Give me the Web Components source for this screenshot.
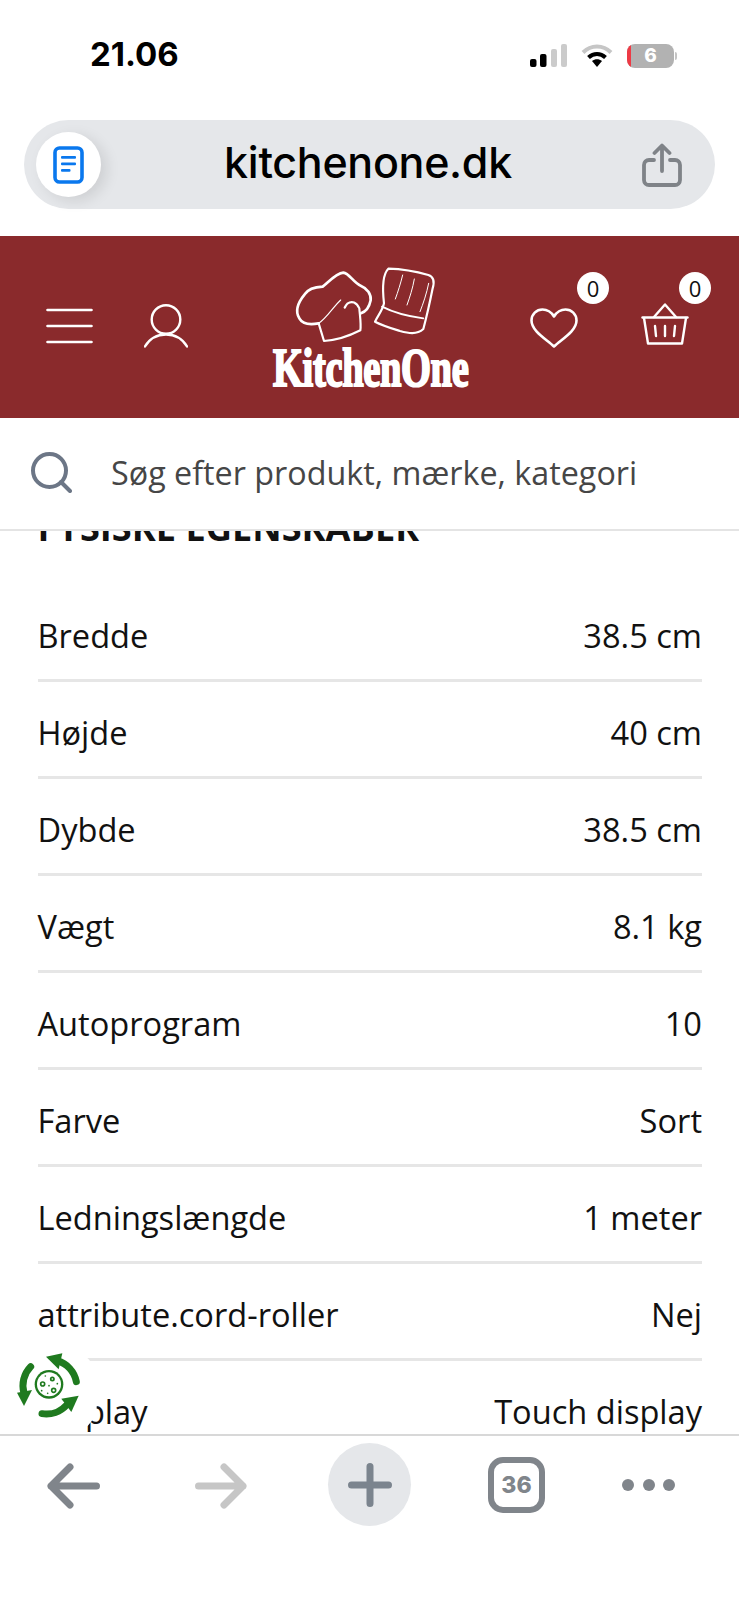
<!DOCTYPE html>
<html lang="da">
<head>
<meta charset="utf-8">
<title>KitchenOne</title>
<style>
    html, body { margin: 0; padding: 0; background: #fff; }
    body { width: 739px; height: 1600px; overflow: hidden; font-family: "Open Sans", sans-serif; }
</style>
</head>
<body>
<phone-page>
    <status-bar slot="top" time="21.06" battery="6"></status-bar>
    <url-bar slot="top" host="kitchenone.dk"></url-bar>
    <site-header slot="top"></site-header>
    <search-bar slot="top" placeholder="Søg efter produkt, mærke, kategori"></search-bar>

    <spec-table title="FYSISKE EGENSKABER">
        <spec-row><span slot="label">Bredde</span>38.5 cm</spec-row>
        <spec-row><span slot="label">Højde</span>40 cm</spec-row>
        <spec-row><span slot="label">Dybde</span>38.5 cm</spec-row>
        <spec-row><span slot="label">Vægt</span>8.1 kg</spec-row>
        <spec-row><span slot="label">Autoprogram</span>10</spec-row>
        <spec-row><span slot="label">Farve</span>Sort</spec-row>
        <spec-row><span slot="label">Ledningslængde</span>1 meter</spec-row>
        <spec-row><span slot="label">attribute.cord-roller</span>Nej</spec-row>
        <spec-row><span slot="label">Display</span>Touch display</spec-row>
    </spec-table>

    <eco-badge slot="overlay"></eco-badge>
    <browser-toolbar slot="bottom" tabs="36"></browser-toolbar>
</phone-page>

<script>
class PhonePage extends HTMLElement {
    constructor() {
        super();
        this.attachShadow({ mode: "open" });
        this.shadowRoot.innerHTML = `
            <style>
                :host { display: flex; flex-direction: column; position: relative; width: 739px; height: 1600px; overflow: hidden; }
                main { flex: 1; min-height: 0; overflow: hidden; }
            </style>
            <slot name="top"></slot>
            <main><slot></slot></main>
            <slot name="overlay"></slot>
            <slot name="bottom"></slot>
        `;
    }
}

class StatusBar extends HTMLElement {
    constructor() {
        super();
        this.attachShadow({ mode: "open" });
        this.shadowRoot.innerHTML = `
            <style>
                :host { display: flex; align-items: center; height: 120px; box-sizing: border-box; padding: 0 62px 12px 90px; justify-content: space-between; font-family: Inter, sans-serif; }
                .time { font-size: 33px; font-weight: 700; color: #000; letter-spacing: 0; }
                .icons { display: flex; align-items: center; gap: 14px; margin-top: 3px; }
                .bat { position: relative; width: 47px; height: 24px; border-radius: 8px; background: #b2b2b2; overflow: hidden; color: #fff; font-size: 19px; font-weight: 800; text-align: center; line-height: 24px; }
                .bat::before { content: ""; position: absolute; left: 0; top: 0; bottom: 0; width: 4px; background: #ee3a45; }
                .wrap { display: flex; align-items: center; gap: 1px; }
                .nub { width: 2px; height: 8px; border-radius: 0 2px 2px 0; background: #c4c4c4; }
            </style>
            <span class="time"></span>
            <div class="icons">
                <svg width="37" height="23" viewBox="0 0 37 23">
                    <rect x="0" y="15" width="6.5" height="8" rx="2" fill="#000"/>
                    <rect x="10" y="10" width="6.5" height="13" rx="2" fill="#000"/>
                    <rect x="21" y="5" width="6" height="18" rx="2" fill="#cbcbcb"/>
                    <rect x="31" y="0" width="6" height="23" rx="2" fill="#cbcbcb"/>
                </svg>
                <svg width="32" height="24" viewBox="0 0 32 24" fill="none" stroke-linecap="butt">
                    <path d="M2 8.5C10 0.5 22 0.5 30 8.5" stroke="#c6c6c6" stroke-width="4"/>
                    <path d="M7.5 13.5C12.5 8.8 19.5 8.8 24.5 13.5" stroke="#000" stroke-width="4"/>
                    <path d="M11 17L16 23L21 17C18 14.5 14 14.5 11 17Z" fill="#000"/>
                </svg>
                <div class="wrap"><div class="bat"></div><div class="nub"></div></div>
            </div>
        `;
    }
    connectedCallback() {
        this.shadowRoot.querySelector(".time").textContent = this.getAttribute("time");
        this.shadowRoot.querySelector(".bat").textContent = this.getAttribute("battery");
    }
}

class UrlBar extends HTMLElement {
    constructor() {
        super();
        this.attachShadow({ mode: "open" });
        this.shadowRoot.innerHTML = `
            <style>
                :host { display: block; padding: 0 24px; height: 116px; box-sizing: border-box; }
                .pill { display: flex; align-items: center; height: 89px; border-radius: 45px; background: #e5e7ea; padding: 0 33px 0 12px; }
                .doc { flex: none; width: 65px; height: 65px; border-radius: 50%; background: #fff; display: flex; align-items: center; justify-content: center; box-shadow: 6px 4px 14px rgba(0,0,0,0.10); }
                .host { flex: 1; text-align: center; font: 500 43px Inter, "Liberation Sans", sans-serif; color: #000; padding: 0 7px 6px 0; letter-spacing: -0.3px; }
                svg { display: block; }
            </style>
            <div class="pill">
                <div class="doc">
                    <svg width="31" height="38" viewBox="0 0 31 38">
                        <rect x="2" y="2" width="27" height="34" rx="4.5" fill="#fff" stroke="#0a78ee" stroke-width="3.6"/>
                        <rect x="8" y="10" width="15" height="2.8" rx="1" fill="#0a78ee"/>
                        <rect x="8" y="16.5" width="15" height="2.8" rx="1" fill="#0a78ee"/>
                        <rect x="8" y="23" width="9.5" height="2.8" rx="1" fill="#0a78ee"/>
                    </svg>
                </div>
                <span class="host"></span>
                <svg width="40" height="44" viewBox="0 0 40 44" fill="none" stroke="#7f8388" stroke-linecap="round" stroke-linejoin="round">
                    <path d="M12 17H7A5 5 0 0 0 2 22V37A5 5 0 0 0 7 42H33A5 5 0 0 0 38 37V22A5 5 0 0 0 33 17H28" stroke-width="3.8"/>
                    <path d="M20 28V3M12.5 10L20 2.5L27.5 10" stroke-width="3.8"/>
                </svg>
            </div>
        `;
    }
    connectedCallback() {
        this.shadowRoot.querySelector(".host").textContent = this.getAttribute("host");
    }
}

class SiteHeader extends HTMLElement {
    constructor() {
        super();
        this.attachShadow({ mode: "open" });
        this.shadowRoot.innerHTML = `
            <style>
                :host { display: flex; align-items: flex-start; height: 182px; background: #8a2a2c; padding-left: 46px; box-sizing: border-box; color: #fff; }
                svg { display: block; flex: none; }
                .ham { margin-top: 72px; }
                .user { margin: 68px 0 0 51px; }
                .logo { position: relative; width: 220px; height: 145px; margin: 19px 0 0 72px; flex: none; }
                .logo span { position: absolute; left: 13px; top: 84px; font: 700 55px/58px "Liberation Serif", serif; white-space: nowrap; transform: scaleX(0.7); transform-origin: 0 0; -webkit-text-stroke: 2.2px #fff; letter-spacing: -0.5px; }
                .slot-icon { position: relative; flex: none; }
                .heart { margin: 72px 0 0 50px; width: 48px; height: 40px; }
                .basket { margin: 67px 0 0 63px; width: 48px; height: 42px; }
                .badge { position: absolute; width: 32px; height: 32px; border-radius: 50%; background: #fff; color: #111; font: 400 22px/32px "Open Sans", sans-serif; text-align: center; }
                .heart .badge { left: 47px; top: -36px; }
                .basket .badge { left: 38px; top: -31px; }
            </style>
            <svg class="ham" width="47" height="36" viewBox="0 0 47 36" fill="none" stroke="#fff" stroke-width="2.6" stroke-linecap="round">
                <path d="M1.5 2H45.5M1.5 18H45.5M1.5 34H45.5"/>
            </svg>
            <svg class="user" width="44" height="44" viewBox="0 0 44 44" fill="none" stroke="#fff" stroke-width="2.4" stroke-linecap="round">
                <circle cx="22" cy="15.5" r="14.3"/>
                <path d="M1 42.5C6 34 13 30.5 22 30.5C31 30.5 38 34 43 42.5"/>
            </svg>
            <div class="logo">
                <svg width="220" height="90" viewBox="0 0 660 270" fill="none" stroke="#fff" stroke-linejoin="round" stroke-linecap="round">
                    <path d="M176 205C150 210 128 208 118 190C104 168 116 140 134 118C146 100 165 96 188 95C205 82 228 55 250 53C268 55 282 85 302 92C322 100 334 118 332 136C328 156 318 170 303 175" stroke-width="8"/>
                    <path d="M176 205L192 258C226 256 266 244 301 226C304 208 300 185 298 160C290 142 276 136 262 146C258 150 256 155 254 158" stroke-width="6.5"/>
                    <path d="M176 205C200 190 220 155 242 135" stroke-width="3.5"/>
                    <path d="M385 41C420 42 470 50 505 60C520 65 524 80 518 100C510 140 500 185 490 222C470 240 445 235 420 228C395 220 368 212 345 200C355 180 368 165 372 145C368 110 366 60 385 41Z" stroke-width="6.5"/>
                    <path d="M366 155C405 175 450 185 490 190" stroke-width="5.5"/>
                    <path d="M428 60C422 85 414 110 406 132M463 72C458 100 450 125 441 150M506 85C500 115 490 145 480 170" stroke-width="3"/>
                </svg>
                <span>KitchenOne</span>
            </div>
            <div class="slot-icon heart">
                <svg width="48" height="40" viewBox="0 0 48 40" fill="none" stroke="#fff" stroke-width="2.6" stroke-linejoin="round">
                    <path d="M24 38.5C16 31 1.5 23 1.5 12.5C1.5 6 6.5 1.5 12.5 1.5C17.5 1.5 21.5 4.5 24 8.5C26.5 4.5 30.5 1.5 35.5 1.5C41.5 1.5 46.5 6 46.5 12.5C46.5 23 32 31 24 38.5Z"/>
                </svg>
                <span class="badge">0</span>
            </div>
            <div class="slot-icon basket">
                <svg width="48" height="42" viewBox="0 0 48 42" fill="none" stroke="#fff" stroke-width="2.4" stroke-linejoin="round" stroke-linecap="round">
                    <path d="M1.5 14.5H46.5"/>
                    <path d="M3 15L7 40.5H41L45 15"/>
                    <path d="M13 14L24 1.5L35 14"/>
                    <path d="M14 23L15 33M24 23V33M34 23L33 33"/>
                </svg>
                <span class="badge">0</span>
            </div>
        `;
    }
}

class SearchBar extends HTMLElement {
    constructor() {
        super();
        this.attachShadow({ mode: "open" });
        this.shadowRoot.innerHTML = `
            <style>
                :host { display: flex; align-items: center; height: 113px; box-sizing: border-box; padding: 0 0 3px 31px; border-bottom: 2px solid #e4e4e4; background: #fff; position: relative; z-index: 1; font-family: "Open Sans", sans-serif; }
                span { margin-left: 39px; font-size: 32.3px; color: #464646; white-space: nowrap; }
                svg { display: block; flex: none; }
            </style>
            <svg width="41" height="41" viewBox="0 0 41 41" fill="none" stroke="#6c7686" stroke-width="4" stroke-linecap="round">
                <circle cx="18.5" cy="18.5" r="16.5"/>
                <path d="M30 30L39 39"/>
            </svg>
            <span></span>
        `;
    }
    connectedCallback() {
        this.shadowRoot.querySelector("span").textContent = this.getAttribute("placeholder");
    }
}

class SpecTable extends HTMLElement {
    constructor() {
        super();
        this.attachShadow({ mode: "open" });
        this.shadowRoot.innerHTML = `
            <style>
                :host { display: block; padding: 0 37px 0 37.5px; font-family: "Open Sans", sans-serif; }
                h2 { margin: -25px 0 0; height: 79px; font-size: 36.2px; line-height: 42px; font-weight: 700; color: #111; white-space: nowrap; }
            </style>
            <h2></h2>
            <slot></slot>
        `;
    }
    connectedCallback() {
        this.shadowRoot.querySelector("h2").textContent = this.getAttribute("title");
    }
}

class SpecRow extends HTMLElement {
    constructor() {
        super();
        this.attachShadow({ mode: "open" });
        this.shadowRoot.innerHTML = `
            <style>
                :host { display: flex; justify-content: space-between; align-items: center; height: 97px; box-sizing: border-box; padding-top: 6px; border-bottom: 3px solid #e6e6e6; font-size: 32.6px; color: #111; white-space: nowrap; }
            </style>
            <span><slot name="label"></slot></span>
            <span><slot></slot></span>
        `;
    }
}

class EcoBadge extends HTMLElement {
    constructor() {
        super();
        this.attachShadow({ mode: "open" });
        this.shadowRoot.innerHTML = `
            <style>
                :host { display: block; position: absolute; left: 0; top: 1350px; width: 97px; height: 84px; background: #fff; border-radius: 0 30px 30px 0; }
                svg { display: block; }
            </style>
            <svg width="110" height="80" viewBox="0 0 330 240" style="margin-top:-10px">
                <g fill="none" stroke="#1f7a1f" stroke-width="21" stroke-linecap="round">
                    <path d="M229 125A82 82 0 0 0 172 62"/>
                    <path d="M92 80A82 82 0 0 0 72 160"/>
                    <path d="M126 221A82 82 0 0 0 200 195"/>
                </g>
                <g fill="#1f7a1f">
                    <path d="M138 50L187 40L176 88Z"/>
                    <path d="M72 198L51 158L96 150Z"/>
                    <path d="M236 167L184 176L214 216Z"/>
                    <circle cx="147" cy="133" r="43"/>
                </g>
                <circle cx="147" cy="133" r="36" fill="#fff"/>
                <g fill="none" stroke="#1f7a1f" stroke-width="5">
                    <circle cx="128" cy="132" r="6"/>
                    <circle cx="157" cy="117" r="5"/>
                    <circle cx="161" cy="151" r="6"/>
                </g>
                <g fill="#1f7a1f">
                    <circle cx="136" cy="108" r="2.5"/>
                    <circle cx="172" cy="131" r="2.5"/>
                    <circle cx="147" cy="137" r="2.5"/>
                    <circle cx="125" cy="152" r="2.5"/>
                    <circle cx="143" cy="160" r="2.5"/>
                </g>
            </svg>
        `;
    }
}

class BrowserToolbar extends HTMLElement {
    constructor() {
        super();
        this.attachShadow({ mode: "open" });
        this.shadowRoot.innerHTML = `
            <style>
                :host { display: flex; align-items: flex-start; height: 166px; box-sizing: border-box; border-top: 2px solid #d8d8d8; background: #fff; padding-left: 47px; position: relative; }
                svg { display: block; flex: none; }
                .back { margin-top: 27px; }
                .fwd { margin: 27px 0 0 95px; }
                .plus { flex: none; margin: 7px 0 0 81px; width: 83px; height: 83px; border-radius: 50%; background: #e5e7ea; display: flex; align-items: center; justify-content: center; }
                .tabs { flex: none; margin: 21px 0 0 77px; width: 57px; height: 56px; box-sizing: border-box; border: 6px solid #80858b; border-radius: 15px; color: #80858b; font: 800 23px/44px Inter, sans-serif; text-align: center; }
                .dots { display: flex; gap: 8.5px; margin: 43px 0 0 77px; }
                .dots i { width: 12px; height: 12px; border-radius: 50%; background: #80858b; }
            </style>
            <svg class="back" width="53" height="46" viewBox="0 0 53 46" fill="none" stroke="#80858b" stroke-width="7" stroke-linecap="round" stroke-linejoin="round">
                <path d="M49.5 23H4M23 4L4 23L23 42"/>
            </svg>
            <svg class="fwd" width="52" height="46" viewBox="0 0 52 46" fill="none" stroke="#c6c6c6" stroke-width="7" stroke-linecap="round" stroke-linejoin="round">
                <path d="M3.5 23H48M29 4L48 23L29 42"/>
            </svg>
            <div class="plus">
                <svg width="44" height="44" viewBox="0 0 44 44" fill="none" stroke="#7b848e" stroke-width="7" stroke-linecap="round">
                    <path d="M3.5 22H40.5M22 3.5V40.5"/>
                </svg>
            </div>
            <div class="tabs"></div>
            <div class="dots"><i></i><i></i><i></i></div>
        `;
    }
    connectedCallback() {
        this.shadowRoot.querySelector(".tabs").textContent = this.getAttribute("tabs");
    }
}

customElements.define("phone-page", PhonePage);
customElements.define("status-bar", StatusBar);
customElements.define("url-bar", UrlBar);
customElements.define("site-header", SiteHeader);
customElements.define("search-bar", SearchBar);
customElements.define("spec-table", SpecTable);
customElements.define("spec-row", SpecRow);
customElements.define("eco-badge", EcoBadge);
customElements.define("browser-toolbar", BrowserToolbar);
</script>
</body>
</html>
